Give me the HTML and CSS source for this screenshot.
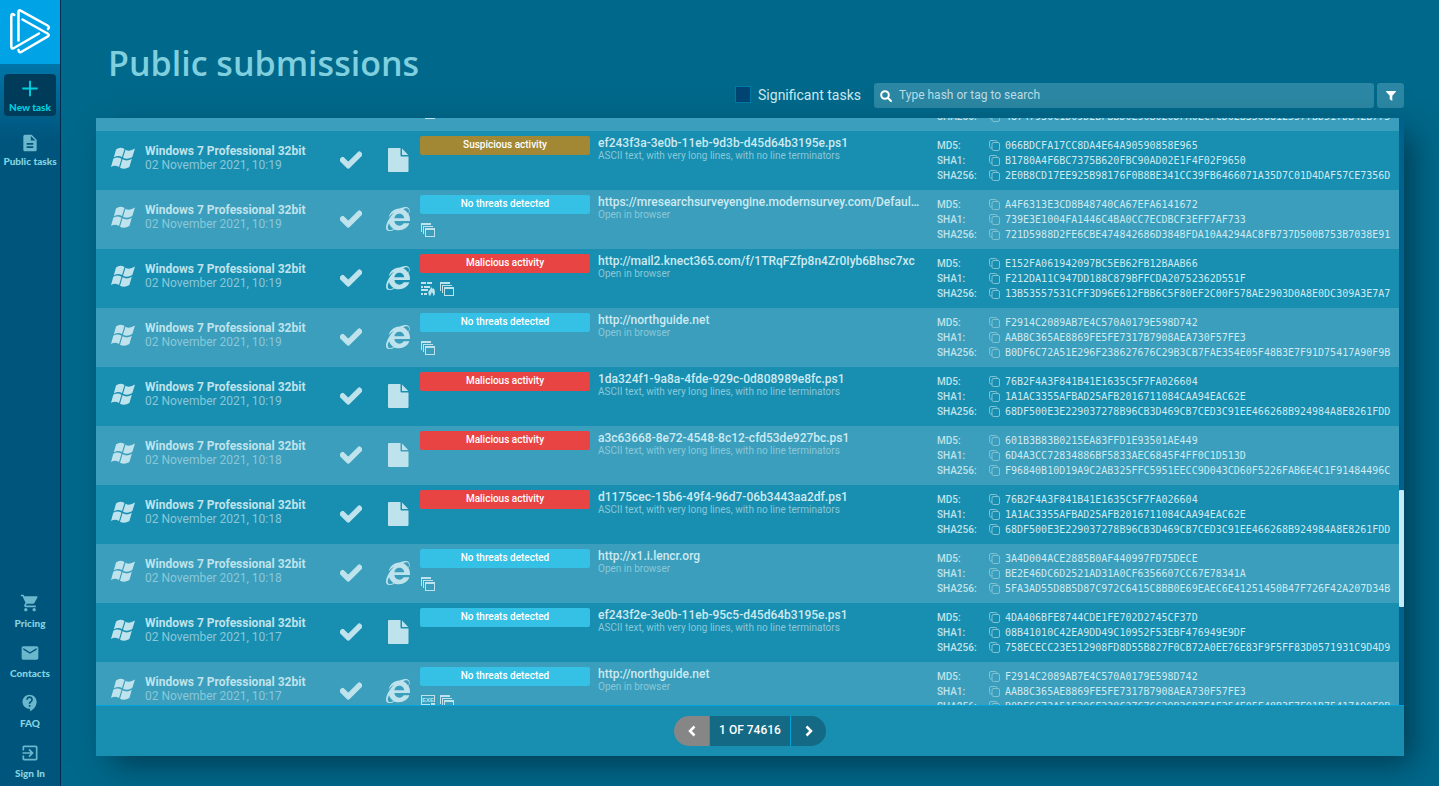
FILE: index.html
```html
<!DOCTYPE html>
<html lang="en">
<head>
    <meta charset="UTF-8">
    <meta name="viewport" content="width=device-width, initial-scale=1.0">
    <title>Public submissions</title>
    <link rel="stylesheet" href="styles.css">
</head>
<body>
    <svg class="sprite" aria-hidden="true">
        <symbol id="i-windows" viewBox="0 0 24 22">
            <path d="M5 2.5Q9-.8 13.5 2L11 10Q7 7.800 2.800 10.500zM14.500 2.800Q18.500 5.200 24 1.600L21.300 10Q16.500 13 12 10.700zM2.300 11.800Q6.500 9.200 10.500 11.700L8 20Q4 17.600 0 20zM11.500 12.300Q16 14.700 20.800 11.800L18.400 20Q13.500 23 9 20.700z"/>
        </symbol>
        <symbol id="i-check" viewBox="0 0 512 512">
            <path d="M173.898 439.404l-166.400-166.400c-9.997-9.997-9.997-26.206 0-36.204l36.203-36.204c9.997-9.998 26.207-9.998 36.204 0L192 312.690 432.095 72.596c9.997-9.997 26.207-9.997 36.204 0l36.203 36.204c9.997 9.997 9.997 26.206 0 36.204l-294.400 294.401c-9.998 9.997-26.207 9.997-36.204-.001z" stroke="currentColor" stroke-width="24"/>
        </symbol>
        <symbol id="i-file" viewBox="0 0 22 24">
            <path d="M2 0H13.500V7.500Q13.500 8.500 14.500 8.500H21.500V23Q21.500 24 20.500 24H2Q1 24 1 23V1Q1 0 2 0zM15 .5L21.200 7H15z"/>
        </symbol>
        <symbol id="i-browser" viewBox="0 0 512 512">
            <path d="M483.049 159.706c10.855-24.575 21.424-60.438 21.424-87.871 0-72.722-79.641-98.371-209.673-38.577-107.632-7.181-211.221 73.670-237.098 186.457 30.852-34.862 78.271-82.298 121.977-101.158C125.404 166.850 79.128 228.002 43.992 291.725 23.246 329.651 0 390.940 0 436.747c0 98.575 92.854 86.500 180.251 42.006 31.423 15.430 66.559 15.573 101.695 15.573 97.124 0 184.249-54.294 216.814-146.022H377.927c-52.509 88.593-196.819 52.996-196.819-47.436H509.900c6.407-43.581-1.655-95.715-26.851-141.162zM64.559 346.877c17.711 51.150 53.703 95.871 100.266 123.304-88.741 48.940-173.267 29.096-100.266-123.304zm115.977-108.873c2-55.152 50.276-94.871 103.980-94.871 53.418 0 101.981 39.719 103.981 94.871H180.536zm184.536-187.600c21.425-10.287 48.563-22.003 72.558-22.003 31.422 0 54.274 21.717 54.274 53.722 0 20.003-7.427 49.007-14.569 67.867-26.280-42.292-65.986-81.584-112.263-99.586z"/>
        </symbol>
        <symbol id="i-stack" viewBox="0 0 14 14">
            <path d="M0 0H10V2H1V9H0zM2 3H12V4H3V11H2zM4 5H14V14H4zM5 7V13H13V7z" fill-rule="evenodd"/>
        </symbol>
        <symbol id="i-firewall" viewBox="0 0 14 14">
            <path d="M0 0H5V2H0zM6 0H11V2H6zM0 4H2V6H0zM3 4H9V6H3zM0 7H7V9H0zM0 11H2V13H0zM3 11H6V13H3z"/>
            <path d="M10 4Q10 6 12 7Q12.500 6.500 12.300 5.500Q14 8 14 10.500Q14 13 12.300 14Q12.500 11.500 10.700 10Q10.700 12 9.500 12.500L9.500 14Q7 13 7.300 10.500Q7.500 9 9 7.500Q10 6 10 4z"/>
        </symbol>
        <symbol id="i-exe" viewBox="0 0 14 14">
            <path d="M0 0H14V7H13V1H1V9H9V10H0zM10 8H14V10H10z"/>
            <text x="7" y="7" font-family="Liberation Sans" font-weight="700" font-size="6" text-anchor="middle">EXE</text>
        </symbol>
        <symbol id="i-copy" viewBox="0 0 11 11">
            <path d="M3 8H2Q.5 8 .5 6.500V2Q.5.5 2 .5H6.500Q8 .5 8 2M4 2.500H9Q10.500 2.500 10.500 4V9Q10.500 10.500 9 10.500H4.500Q3 10.500 3 9V4Q3 2.500 4.500 2.500z" fill="none" stroke="currentColor"/>
        </symbol>
    </svg>

    <div class="app">
        <nav class="sidebar">
            <a class="logo" href="#" aria-label="Home">
                <svg width="60" height="64" viewBox="0 0 60 64" fill="none" stroke="#fff" stroke-width="2.500" stroke-linecap="round" stroke-linejoin="round">
                    <path d="M14.300 15Q11.300 12.500 11.300 16.500V46.500Q11.300 49.500 14 48L39 33.500"/>
                    <path d="M18.500 40.500V12Q18.500 9.500 21 10.800L47.500 25.500Q50 27 48 29"/>
                    <path d="M22.500 19.500L47.500 33.500Q50 35 47.500 36.700L22 51.500Q19 53.500 18.500 50"/>
                </svg>
            </a>
            <a class="nav-item active" href="#">
                <svg width="24" height="24" viewBox="0 0 24 24"><path d="M11 4h2v7h7v2h-7v7h-2v-7H4v-2h7z"/></svg>
                New task
            </a>
            <a class="nav-item" href="#">
                <svg width="20" height="20" viewBox="0 0 24 24"><path d="M14 2H6c-1.100 0-1.990.9-1.990 2L4 20c0 1.100.89 2 1.990 2H18c1.100 0 2-.9 2-2V8l-6-6zm2 16H8v-2h8v2zm0-4H8v-2h8v2zm-3-5V3.500L18.500 9H13z"/></svg>
                Public tasks
            </a>
            <div class="nav-bottom">
                <a class="nav-item" href="#">
                    <svg width="20" height="20" viewBox="0 0 24 24"><path d="M7 18c-1.100 0-1.990.9-1.990 2S5.900 22 7 22s2-.9 2-2-.9-2-2-2zM1 2v2h2l3.600 7.590-1.350 2.450c-.16.28-.25.61-.25.96 0 1.100.9 2 2 2h12v-2H7.420c-.14 0-.25-.11-.25-.25l.03-.12.9-1.630h7.450c.75 0 1.410-.41 1.750-1.030l3.580-6.490A1 1 0 0 0 20 4H5.210l-.94-2H1zm16 16c-1.100 0-1.990.9-1.990 2s.89 2 1.990 2 2-.9 2-2-.9-2-2-2z"/></svg>
                    Pricing
                </a>
                <a class="nav-item" href="#">
                    <svg width="20" height="20" viewBox="0 0 24 24"><path d="M20 4H4c-1.100 0-1.990.9-1.990 2L2 18c0 1.100.9 2 2 2h16c1.100 0 2-.9 2-2V6c0-1.100-.9-2-2-2zm0 4l-8 5-8-5V6l8 5 8-5v2z"/></svg>
                    Contacts
                </a>
                <a class="nav-item" href="#">
                    <svg width="20" height="20" viewBox="0 0 24 24"><path d="M11.500 2C6.810 2 3 5.810 3 10.500S6.810 19 11.500 19h.5v3c4.860-2.340 8-7 8-11.500C20 5.810 16.190 2 11.500 2zm1 14.500h-2v-2h2v2zm0-3.500h-2c0-3.250 3-3 3-5 0-1.100-.9-2-2-2s-2 .9-2 2h-2c0-2.210 1.790-4 4-4s4 1.790 4 4c0 2.500-3 2.750-3 5z"/></svg>
                    FAQ
                </a>
                <a class="nav-item" href="#">
                    <svg width="20" height="20" viewBox="0 0 24 24"><path d="M10.090 15.590L11.500 17l5-5-5-5-1.410 1.410L12.670 11H3v2h9.670l-2.580 2.590zM19 3H5c-1.110 0-2 .9-2 2v4h2V5h14v14H5v-4H3v4c0 1.100.89 2 2 2h14c1.100 0 2-.9 2-2V5c0-1.100-.9-2-2-2z"/></svg>
                    Sign In
                </a>
            </div>
        </nav>

        <main class="content">
            <h1>Public submissions</h1>
            <form class="filters" onsubmit="return false">
                <label class="significant"><input type="checkbox"> Significant tasks</label>
                <div class="search">
                    <svg width="12" height="12" viewBox="0 0 12 12" fill="none" stroke="#fff" stroke-width="2"><circle cx="5" cy="5" r="3.800"/><path d="M7.800 7.800L11 11" stroke-linecap="round"/></svg>
                    <input type="text" placeholder="Type hash or tag to search" aria-label="Search">
                </div>
                <button class="filter-btn" type="button" aria-label="Filter">
                    <svg width="10" height="10" viewBox="0 0 10 10"><path d="M.3 0H9.700Q10.200.5 9.700 1L6.300 4.800V10L3.700 8.200V4.800L.3 1Q-.2.5.3 0z"/></svg>
                </button>
            </form>

            <section class="panel">
                <div class="list">
                    <table id="tasks">
                        <colgroup>
                            <col class="c-os"><col class="c-status"><col class="c-type"><col class="c-verdict"><col><col class="c-hash">
                        </colgroup>
                        <tbody></tbody>
                    </table>
                    <div class="track"><div class="thumb"></div></div>
                </div>
                <div class="pager">
                    <button class="prev" aria-label="Previous page" disabled>
                        <svg width="8" height="12" viewBox="0 0 8 12"><path d="M6.500 1.500L2 6l4.500 4.500"/></svg>
                    </button>
                    <span class="page">1 OF 74616</span>
                    <button class="next" aria-label="Next page">
                        <svg width="8" height="12" viewBox="0 0 8 12"><path d="M1.500 1.500L6 6l-4.500 4.500"/></svg>
                    </button>
                </div>
            </section>
        </main>
    </div>

    <script src="tasks.js"></script>
</body>
</html>
```
FILE: styles.css
```css
* {
    box-sizing: border-box;
}
body {
    margin: 0;
    font-family: Roboto, sans-serif;
    font-size: 12px;
    color: #bfe3ec;
    background-color: #00688a;
}
a {
    color: inherit;
    text-decoration: none;
}
button {
    border: 0;
    padding: 0;
    cursor: pointer;
}
svg {
    display: block;
    fill: currentColor;
}
.sprite {
    display: none;
}
.app {
    display: flex;
    height: 100vh;
    overflow: hidden;
}

/* sidebar */
.sidebar {
    display: flex;
    flex-direction: column;
    flex: none;
    width: 61px;
    border-right: 1px solid #012c4e;
    background: linear-gradient(#0077ab 60px, #00557c 140px);
}
.logo {
    height: 64px;
    margin-bottom: 10px;
    background-color: #00a4e6;
}
.logo svg {
    fill: none;
}
.nav-item {
    display: flex;
    flex-direction: column;
    align-items: center;
    justify-content: space-between;
    height: 42px;
    margin: 0 4px 12px;
    padding: 5px 0 2px;
    font: 900 10px/14px Lato, sans-serif;
    white-space: nowrap;
    color: #84d3e0;
}
.nav-item svg {
    color: #6bb8cc;
}
.nav-item.active {
    padding-top: 3px;
    border-radius: 4px;
    background-color: #003c5a;
}
.nav-item.active,
.nav-item.active svg {
    color: #00cfdf;
}
.nav-bottom {
    margin-top: auto;
    padding-bottom: 4px;
}
.nav-bottom .nav-item {
    margin-bottom: 8px;
    padding-top: 3px;
}
.nav-bottom .nav-item:last-child {
    margin-bottom: 0;
}

/* header */
.content {
    display: flex;
    flex-direction: column;
    flex: 1;
    min-width: 0;
    padding: 43px 35px 30px;
}
h1 {
    margin: 0 0 0 12px;
    font: 600 34px/40px "Open Sans", sans-serif;
    color: #7fcfde;
}
.filters {
    display: flex;
    justify-content: flex-end;
    align-items: center;
    gap: 3px;
    margin-bottom: 10px;
}
.significant {
    display: flex;
    align-items: center;
    gap: 7px;
    height: 25px;
    margin-right: 10px;
    padding-bottom: 2px;
    font-size: 14px;
    color: #cbe8f0;
}
.significant input {
    appearance: none;
    width: 16px;
    height: 17px;
    margin: 0;
    border: 1px solid #0079a8;
    background-color: #004673;
}
.search {
    display: flex;
    align-items: center;
    gap: 7px;
    width: 500px;
    height: 25px;
    padding: 0 6px;
    border-radius: 3px;
    background-color: #2b87a3;
}
.search input {
    flex: 1;
    border: 0;
    outline: 0;
    padding: 0 0 2px;
    font: 12px/16px Roboto, sans-serif;
    color: #fff;
    background: none;
}
.search input::placeholder {
    color: #bcdde6;
}
.search svg {
    fill: none;
}
.filter-btn {
    display: flex;
    align-items: center;
    justify-content: center;
    width: 27px;
    height: 25px;
    border-radius: 3px;
    color: #fff;
    background-color: #2b87a3;
}

/* task list */
.panel {
    display: flex;
    flex-direction: column;
    flex: 1;
    min-height: 0;
    background-color: #188eb0;
    box-shadow: 12px 12px 30px -4px rgba(0, 30, 45, 0.6);
}
.list {
    position: relative;
    flex: 1;
    min-height: 0;
    padding-right: 5px;
    overflow: hidden;
    border-bottom: 1px solid #00a4dc;
}
table {
    width: 100%;
    margin-top: -46px;
    table-layout: fixed;
    border-collapse: collapse;
}
tr {
    height: 59px;
}
tr:nth-child(odd) {
    background-color: #3a9ebc;
}
td {
    padding: 0;
    vertical-align: top;
}
.c-os {
    width: 232px;
}
.c-status,
.c-type {
    width: 46px;
}
.c-verdict {
    width: 178px;
}
.c-hash {
    width: 462px;
}
.os {
    display: flex;
    align-items: center;
    gap: 10px;
    padding: 13px 0 0 15px;
    line-height: 14px;
}
.os b,
.os span {
    display: block;
}
.os span,
.name small {
    color: #8ac8d9;
}
.status {
    padding-top: 18px;
}
.type {
    padding: 17px 0 0 2px;
}
.status svg,
.type svg {
    margin: 0 auto;
}
.verdict {
    padding: 5px 8px 0 0;
}
.tag {
    height: 19px;
    margin-bottom: 9px;
    border-radius: 2px;
    font-size: 10px;
    font-weight: 500;
    line-height: 18px;
    text-align: center;
    color: #fff;
}
.clean {
    background-color: #35c1e5;
}
.suspicious {
    background-color: #a28735;
}
.malicious {
    background-color: #e94444;
}
.marks {
    display: flex;
    gap: 5px;
    padding-left: 1px;
}
.name {
    padding: 5px 16px 0 0;
}
.name b {
    display: block;
    font-weight: 500;
    line-height: 14px;
    overflow: hidden;
    text-overflow: ellipsis;
    white-space: nowrap;
    color: #cdeaf2;
}
.name small {
    display: block;
    font-size: 10px;
    line-height: 11px;
}
.hashes {
    display: grid;
    grid-template-columns: 52px 16px 1fr;
    align-items: center;
    padding-top: 7px;
    font-size: 10px;
    font-weight: 500;
    line-height: 15px;
}
.hashes button {
    color: #7fc2d4;
    background: none;
}
.hashes code {
    font-family: "DejaVu Sans Mono", monospace;
    font-size: 10px;
    font-weight: 400;
    line-height: 15px;
    color: #cdeaf2;
}
.track {
    position: absolute;
    top: 0;
    right: 0;
    bottom: 0;
    width: 5px;
    background-color: #00618c;
}
.thumb {
    position: absolute;
    top: 372px;
    width: 5px;
    height: 117px;
    border-radius: 1px;
    background-color: #c5e8f7;
}

/* pager */
.pager {
    display: flex;
    justify-content: center;
    align-items: center;
    height: 50px;
    gap: 1px;
}
.pager button,
.page {
    display: flex;
    align-items: center;
    justify-content: center;
    height: 30px;
    color: #fff;
    background-color: #146a85;
}
.pager button {
    width: 35px;
}
.pager .prev {
    border-radius: 15px 0 0 15px;
    background-color: #868686;
}
.pager .next {
    border-radius: 0 15px 15px 0;
}
.page {
    width: 80px;
    padding-bottom: 2px;
    box-shadow: 0 0 0 1px #00a4dc;
    clip-path: inset(0 -1px);
    font-weight: 500;
}
.pager svg {
    fill: none;
    stroke: #fff;
    stroke-width: 2.5;
}
```
FILE: tasks.js
```js
const os = "Windows 7 Professional 32bit";
const verdicts = {
    clean: "No threats detected",
    suspicious: "Suspicious activity",
    malicious: "Malicious activity"
};
const kinds = {
    file: "ASCII text, with very long lines, with no line terminators",
    browser: "Open in browser"
};

// time, type, verdict, marks, name, md5, sha1, sha256
const tasks = [
    ["10:19", "browser", "clean", ["stack"], "", "", "", "48747930C1D09D2BFBBD0E90B020DFA0EC7CD62B35088125577BD517DB42B775"],
    ["10:19", "file", "suspicious", [], "ef243f3a-3e0b-11eb-9d3b-d45d64b3195e.ps1", "066BDCFA17CC8DA4E64A90590858E965", "B1780A4F6BC7375B620FBC90AD02E1F4F02F9650", "2E0B8CD17EE925B98176F0B8BE341CC39FB6466071A35D7C01D4DAF57CE7356D"],
    ["10:19", "browser", "clean", ["stack"], "https://mresearchsurveyengine.modernsurvey.com/Default.aspx", "A4F6313E3CD8B48740CA67EFA6141672", "739E3E1004FA1446C4BA0CC7ECDBCF3EFF7AF733", "721D5988D2FE6CBE474842686D384BFDA10A4294AC8FB737D500B753B7038E91"],
    ["10:19", "browser", "malicious", ["firewall", "stack"], "http://mail2.knect365.com/f/1TRqFZfp8n4Zr0Iyb6Bhsc7xc", "E152FA061942097BC5EB62FB12BAAB66", "F212DA11C947DD188C879BFFCDA20752362D551F", "13B53557531CFF3D96E612FBB6C5F80EF2C00F578AE2903D0A8E0DC309A3E7A7"],
    ["10:19", "browser", "clean", ["stack"], "http://northguide.net", "F2914C2089AB7E4C570A0179E598D742", "AAB8C365AE8869FE5FE7317B7908AEA730F57FE3", "B0DF6C72A51E296F238627676C29B3CB7FAE354E05F48B3E7F91D75417A90F9B"],
    ["10:19", "file", "malicious", [], "1da324f1-9a8a-4fde-929c-0d808989e8fc.ps1", "76B2F4A3F841B41E1635C5F7FA026604", "1A1AC3355AFBAD25AFB2016711084CAA94EAC62E", "68DF500E3E229037278B96CB3D469CB7CED3C91EE466268B924984A8E8261FDD"],
    ["10:18", "file", "malicious", [], "a3c63668-8e72-4548-8c12-cfd53de927bc.ps1", "601B3B83B0215EA83FFD1E93501AE449", "6D4A3CC72834886BF5833AEC6845F4FF0C1D513D", "F96840B10D19A9C2AB325FFC5951EECC9D043CD60F5226FAB6E4C1F91484496C"],
    ["10:18", "file", "malicious", [], "d1175cec-15b6-49f4-96d7-06b3443aa2df.ps1", "76B2F4A3F841B41E1635C5F7FA026604", "1A1AC3355AFBAD25AFB2016711084CAA94EAC62E", "68DF500E3E229037278B96CB3D469CB7CED3C91EE466268B924984A8E8261FDD"],
    ["10:18", "browser", "clean", ["stack"], "http://x1.i.lencr.org", "3A4D004ACE2885B0AF440997FD75DECE", "BE2E46DC6D2521AD31A0CF6356607CC67E78341A", "5FA3AD55D8B5D87C972C6415C8BB0E69EAEC6E41251450B47F726F42A207D34B"],
    ["10:17", "file", "clean", [], "ef243f2e-3e0b-11eb-95c5-d45d64b3195e.ps1", "4DA406BFE8744CDE1FE702D2745CF37D", "08B41010C42EA9DD49C10952F53EBF476949E9DF", "758ECECC23E512908FD8D55B827F0CB72A0EE76E83F9F5FF83D0571931C9D4D9"],
    ["10:17", "browser", "clean", ["exe", "stack"], "http://northguide.net", "F2914C2089AB7E4C570A0179E598D742", "AAB8C365AE8869FE5FE7317B7908AEA730F57FE3", "B0DF6C72A51E296F238627676C29B3CB7FAE354E05F48B3E7F91D75417A90F9B"]
];

function icon(name, w, h) {
    return `<svg width="${w}" height="${h}"><use href="#i-${name}"></use></svg>`;
}

function hashLine(label, value) {
    return `<span>${label}:</span><button aria-label="Copy ${label}">${icon("copy", 11, 11)}</button><code>${value}</code>`;
}

const tbody = document.querySelector("#tasks tbody");
tbody.innerHTML = tasks.map(([time, type, verdict, marks, name, md5, sha1, sha256]) => `<tr>
    <td><div class="os">${icon("windows", 24, 22)}<div><b>${os}</b><span>02 November 2021, ${time}</span></div></div></td>
    <td class="status">${icon("check", 22, 22)}</td>
    <td class="type">${icon(type, 24, 24)}</td>
    <td class="verdict"><div class="tag ${verdict}">${verdicts[verdict]}</div><div class="marks">${marks.map(m => icon(m, 14, 14)).join("")}</div></td>
    <td class="name"><b>${name}</b><small>${kinds[type]}</small></td>
    <td><div class="hashes">${hashLine("MD5", md5)}${hashLine("SHA1", sha1)}${hashLine("SHA256", sha256)}</div></td>
</tr>`).join("");
```
